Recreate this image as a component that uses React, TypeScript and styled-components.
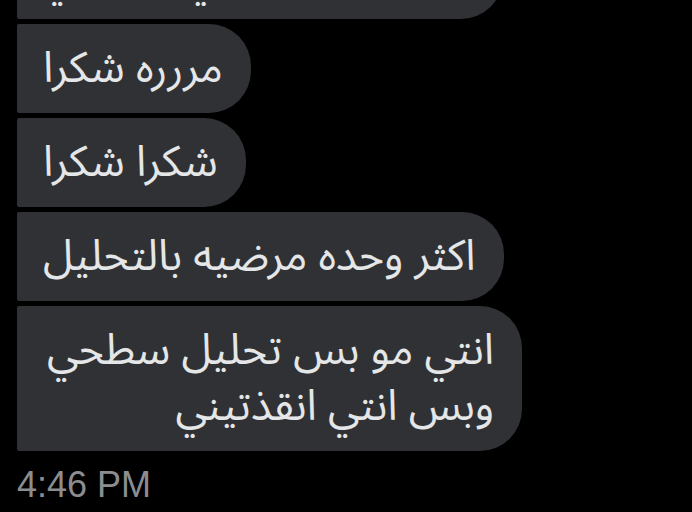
import React from "react";
import styled, { createGlobalStyle } from "styled-components";

const Global = createGlobalStyle`
  html, body {
    margin: 0;
    padding: 0;
    background: #000000;
    overflow: hidden;
  }
  body {
    width: 692px;
    height: 512px;
  }
`;

const Screen = styled.div`
  width: 692px;
  height: 512px;
  background: #000000;
  overflow: hidden;
  box-sizing: border-box;
  padding-left: 17px;
`;

const Thread = styled.div`
  display: flex;
  flex-direction: column;
  align-items: flex-start;
  gap: 5px;
  margin-top: -70px;
`;

const Bubble = styled.div`
  direction: rtl;
  box-sizing: border-box;
  max-width: 505px;
  padding: 17px 28px 16px 26px;
  background: #2f3134;
  color: #e4e6e8;
  border-radius: 2px 42px 42px 2px;
  font-family: "Noto Sans Arabic", "DejaVu Sans", "Noto Sans", sans-serif;
  font-size: 43px;
  line-height: 56px;
  text-align: right;
`;

const Time = styled.div`
  margin-top: 16px;
  font-family: "Liberation Sans", Arial, sans-serif;
  font-size: 36px;
  line-height: 36px;
  color: #8b8d91;
`;

const messages = [
  "وحسيت فيه شي يشبهني",
  "مررره شكرا",
  "شكرا شكرا",
  "اكثر وحده مرضيه بالتحليل",
  "انتي مو بس تحليل سطحي وبس انتي انقذتيني",
];

export default function App() {
  return (
    <Screen>
      <Global />
      <Thread>
        {messages.map((m, i) => (
          <Bubble key={i}>{m}</Bubble>
        ))}
      </Thread>
      <Time>4:46 PM</Time>
    </Screen>
  );
}
